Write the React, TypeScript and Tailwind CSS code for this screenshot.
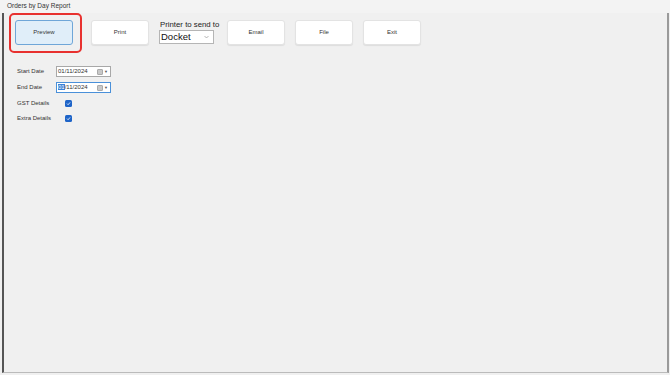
import React from 'react';

const Btn: React.FC<{ label: string; primary?: boolean }> = ({ label, primary }) => (
  <div
    className={`w-[58px] h-[25px] flex items-center justify-center rounded-[3px] text-[6px] text-[#333] ${
      primary
        ? 'bg-[#e0eef9] border border-[#6fa6d8]'
        : 'bg-white border border-[#e3e3e3] shadow-[0_1px_1px_rgba(0,0,0,0.08)]'
    }`}
  >
    {label}
  </div>
);

const DateBox: React.FC<{ value: string; focused?: boolean }> = ({ value, focused }) => (
  <div
    className={`w-[55px] h-[11px] bg-white flex items-center pl-[1px] pr-[2px] text-[6px] text-[#333] border ${
      focused ? 'border-[#4a90d9]' : 'border-[#a8a8a8]'
    }`}
  >
    {focused ? (
      <span>
        <span className="bg-[#3b82d6] text-white">01</span>/11/2024
      </span>
    ) : (
      <span>{value}</span>
    )}
    <span className="ml-auto flex items-center gap-[1px]">
      <span className="w-[6px] h-[6px] rounded-[1px] bg-[#c8c8c8] border border-[#aaa]" />
      <span className="text-[4px] text-[#555]">▼</span>
    </span>
  </div>
);

const Check: React.FC = () => (
  <div className="w-[7px] h-[7px] rounded-[1.5px] bg-[#1e64c8] flex items-center justify-center">
    <svg width="5" height="5" viewBox="0 0 10 10">
      <path d="M2 5.2 L4.2 7.4 L8.2 2.8" fill="none" stroke="white" strokeWidth="1.6" />
    </svg>
  </div>
);

export default function App() {
  return (
    <div
      className="w-[670px] h-[375px] bg-[#f0f0f0] flex flex-col overflow-hidden"
      style={{ fontFamily: '"Liberation Sans", Arial, sans-serif' }}
    >
      <div className="h-[13px] bg-[#f3f3f3] pl-[7px] pt-[3px] text-[6.5px] text-[#333] leading-none shrink-0">
        Orders by Day Report
      </div>
      <div className="flex-1 flex border-l-[2px] border-l-[#555] ml-[2px] border-r-[2px] border-r-[#9a9a9a] mr-[1px] border-b border-b-[#bbb] mb-[2px]">
        <div className="flex-1 flex flex-col">
          <div className="flex items-start pt-[7px]">
            <div className="ml-[5px] mt-[-7px] pl-[4px] pr-[7px] pt-[5px] pb-[6px] border-2 border-[#e8312f] rounded-[5px]">
              <Btn label="Preview" primary />
            </div>
            <div className="ml-[9px]">
              <Btn label="Print" />
            </div>
            <div className="ml-[10px] w-[55px] flex flex-col mt-[-1px]">
              <div className="text-[7.8px] text-[#222] leading-[11px] pl-[1px] whitespace-nowrap">
                Printer to send to
              </div>
              <div className="w-[55px] h-[14px] bg-white border border-[#b5b5b5] flex items-center pl-[1px] pr-[4px] text-[9.5px] text-[#111] leading-none">
                Docket
                <svg className="ml-auto" width="5" height="4" viewBox="0 0 10 6">
                  <path d="M1 1 L5 5 L9 1" fill="none" stroke="#888" strokeWidth="1.2" />
                </svg>
              </div>
            </div>
            <div className="ml-[13px]">
              <Btn label="Email" />
            </div>
            <div className="ml-[10px]">
              <Btn label="File" />
            </div>
            <div className="ml-[10px]">
              <Btn label="Exit" />
            </div>
          </div>
          <div className="flex flex-col ml-[13px] mt-[13px] text-[6px] text-[#333] w-max">
            <div className="flex items-center">
              <span className="w-[39px]">Start Date</span>
              <DateBox value="01/11/2024" />
            </div>
            <div className="flex items-center mt-[5px]">
              <span className="w-[39px]">End Date</span>
              <DateBox value="01/11/2024" focused />
            </div>
            <div className="flex items-center mt-[6px]">
              <span className="w-[48px]">GST Details</span>
              <Check />
            </div>
            <div className="flex items-center mt-[6px]">
              <span className="w-[48px]">Extra Details</span>
              <Check />
            </div>
          </div>
        </div>
      </div>
    </div>
  );
}
